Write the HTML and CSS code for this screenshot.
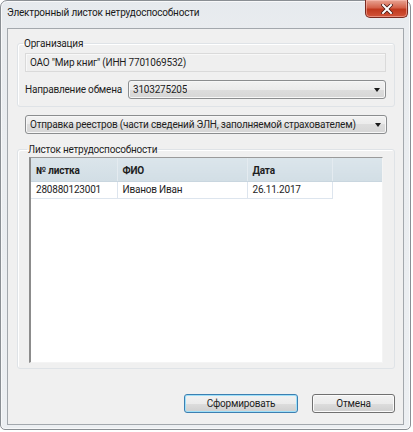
FILE: index.html
```html
<!DOCTYPE html>
<html lang="ru">
<head>
<meta charset="utf-8">
<title>Электронный листок нетрудоспособности</title>
<link rel="stylesheet" href="styles.css">
</head>
<body>
<div class="window">
  <div class="titlebar">
    <span class="title">Электронный листок нетрудоспособности</span>
    <button class="close" aria-label="Закрыть">
      <svg width="12" height="10" viewBox="0 0 12 10">
        <path d="M2 1 L10 9 M10 1 L2 9" stroke="#4a1a14" stroke-width="3.6" stroke-linecap="square" fill="none"/>
        <path d="M2 1 L10 9 M10 1 L2 9" stroke="#ffffff" stroke-width="2" stroke-linecap="square" fill="none"/>
      </svg>
    </button>
  </div>
  <div class="client">
    <fieldset class="group group-org">
      <legend>Организация</legend>
      <div class="readonly">ОАО "Мир книг" (ИНН 7701069532)</div>
      <div class="row">
        <label class="row-label">Направление обмена</label>
        <div class="combo combo-grow"><span>3103275205</span><i class="arrow"></i></div>
      </div>
    </fieldset>
    <div class="combo combo-wide"><span>Отправка реестров (части сведений ЭЛН, заполняемой страхователем)</span><i class="arrow"></i></div>
    <fieldset class="group group-list">
      <legend>Листок нетрудоспособности</legend>
      <div class="grid-view">
        <table class="grid">
          <thead>
            <tr>
              <th class="c1">№ листка</th>
              <th class="c2">ФИО</th>
              <th class="c3">Дата</th>
              <th class="filler"></th>
            </tr>
          </thead>
          <tbody>
            <tr>
              <td>280880123001</td>
              <td>Иванов Иван</td>
              <td>26.11.2017</td>
              <td class="filler"></td>
            </tr>
          </tbody>
        </table>
      </div>
    </fieldset>
    <div class="buttons">
      <button class="btn btn-default">Сформировать</button>
      <button class="btn">Отмена</button>
    </div>
  </div>
</div>
</body>
</html>
```
FILE: styles.css
```css
* { box-sizing: border-box; }

html, body {
  margin: 0;
  background: #ffffff;
}

body {
  font-family: Roboto, "Noto Sans", sans-serif;
  font-size: 10px;
  letter-spacing: -0.2px;
  color: #1e1e1e;
}

.window {
  width: 411px;
  height: 430px;
  border: 1px solid #8a8f94;
  border-radius: 7px 7px 5px 5px;
  background: linear-gradient(#e6eaee, #e9ecef 30px, #eceff2);
  padding: 0 6px 4px 6px;
  display: flex;
  flex-direction: column;
  box-shadow: inset 0 0 0 1px #f8f9fa;
}

.titlebar {
  height: 27px;
  display: flex;
  align-items: flex-start;
  justify-content: space-between;
}

.title {
  padding-top: 6px;
  color: #1a1a1a;
}

.close {
  margin: -1px -4px 0 0;
  width: 43px;
  height: 18px;
  padding: 0;
  border: 1px solid #7a2a20;
  border-top: none;
  border-radius: 0 0 5px 5px;
  background: linear-gradient(#e8a493, #d4624a 45%, #c0391e 55%, #d2543a);
  display: flex;
  align-items: center;
  justify-content: center;
  box-shadow: inset 0 0 0 1px rgba(255, 200, 190, 0.5);
}

.client {
  flex: 1;
  border: 1px solid #a3a8ad;
  background: #f0f0f0;
  padding: 8px 8px 11px 9px;
  display: flex;
  flex-direction: column;
}

.group {
  margin: 0;
  border: 1px solid #dfe3e7;
  border-radius: 3px;
  padding: 3px 8px 8px 7px;
  box-shadow: inset 1px 1px 0 #ffffff;
}

.group legend {
  padding: 0 1px;
  margin-left: -2px;
  color: #1e1e1e;
  line-height: 13px;
}

.group-org {
  height: 70px;
}

.readonly {
  height: 19px;
  border: 1px solid #dadada;
  background: #efefef;
  padding: 0 4px;
  line-height: 17px;
  box-shadow: inset 1px 1px 0 #f8f8f8;
}

.row {
  display: flex;
  align-items: center;
  margin-top: 8px;
}

.row-label {
  width: 103px;
  flex: none;
  white-space: nowrap;
}

.combo {
  height: 19px;
  border: 1px solid #8b8d8f;
  border-radius: 3px;
  background: linear-gradient(#f2f2f2, #ebebeb 50%, #dddddd 50%, #d6d6d6);
  display: flex;
  align-items: center;
  justify-content: space-between;
  padding: 0 5px 0 4px;
  box-shadow: inset 0 0 0 1px #f7f7f7;
  white-space: nowrap;
}

.combo span {
  min-width: 0;
  overflow: hidden;
}

.combo-grow {
  flex: 1;
  min-width: 0;
}

.combo-wide {
  margin: 8px 8px 0 8px;
}

.arrow {
  flex: none;
  width: 0;
  height: 0;
  border-left: 3.5px solid transparent;
  border-right: 3.5px solid transparent;
  border-top: 4px solid #1a1a1a;
}

.group-list {
  margin-top: 9px;
  flex: 1;
  padding: 1px 11px 2px 11px;
  display: flex;
}

.grid-view {
  width: 100%;
  height: 206px;
  background: #ffffff;
  border-top: 1px solid #9a9a9a;
  border-left: 2px solid #8c8c8c;
  border-right: 1px solid #f4f4f4;
  border-bottom: 1px solid #f4f4f4;
}

.grid {
  width: 100%;
  border-collapse: collapse;
  table-layout: fixed;
}

.grid th,
.grid td {
  text-align: left;
  padding: 0 5px;
  white-space: nowrap;
}

.grid th {
  height: 23px;
  padding-top: 2px;
  font-weight: bold;
  background: linear-gradient(#dbe5eb, #d2dee5);
  border-right: 1px solid #e4ebf0;
  border-bottom: 1px solid #c9d6df;
  color: #1e1e1e;
}

.grid td {
  height: 17px;
  border-right: 1px solid #dde5ee;
  border-bottom: 1px solid #dde5ee;
}

.grid .c1 { width: 86px; }
.grid .c2 { width: 130px; }
.grid .c3 { width: 85px; }

.grid th.filler {
  border-right: none;
}

.grid td.filler {
  border: none;
}

.buttons {
  display: flex;
  justify-content: flex-end;
  gap: 14px;
  margin-top: 25px;
}

.btn {
  font-family: inherit;
  font-size: 10px;
  letter-spacing: -0.2px;
  color: #1e1e1e;
  height: 19px;
  padding: 0;
  border: 1px solid #707070;
  border-radius: 3px;
  background: linear-gradient(#f2f2f2, #ebebeb 50%, #dddddd 50%, #cfcfcf);
  box-shadow: inset 0 0 0 1px #fbfbfb;
  width: 83px;
}

.btn-default {
  width: 114px;
  border-color: #3c7fb1;
  box-shadow: inset 0 0 0 1px #9fe0f9;
}
```
